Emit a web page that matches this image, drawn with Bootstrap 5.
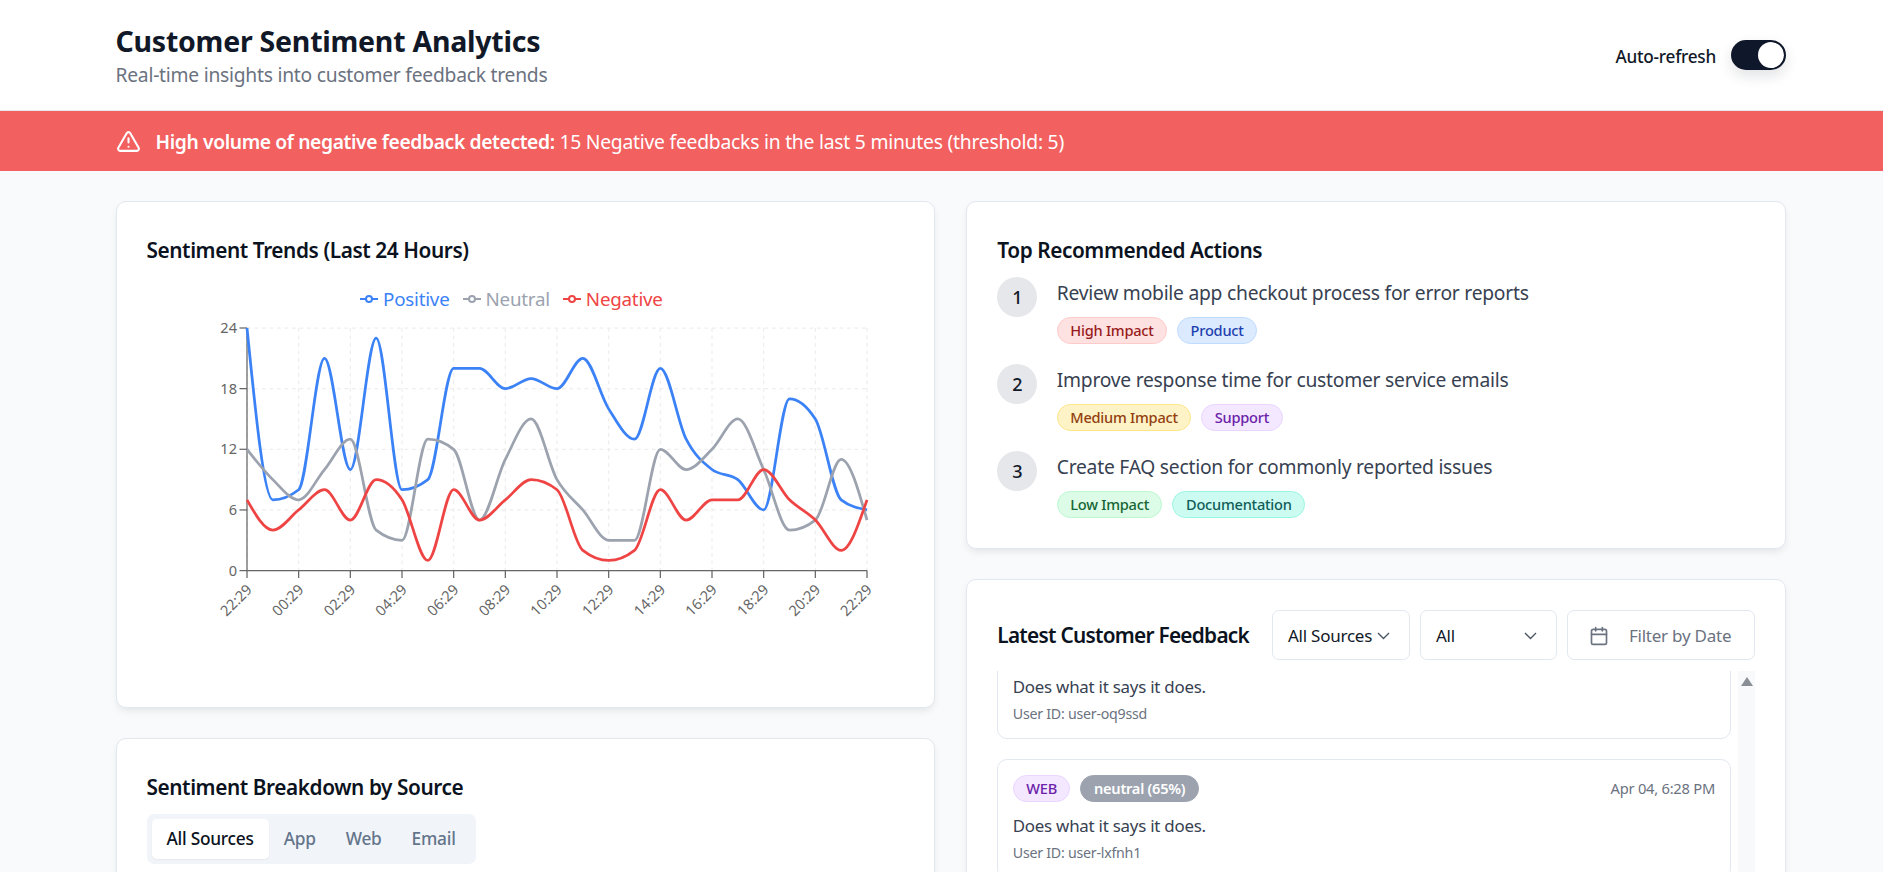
<!doctype html>
<html lang="en">
<head>
<meta charset="utf-8">
<title>Customer Sentiment Analytics</title>
<link href="https://cdn.jsdelivr.net/npm/bootstrap@5.3.0/dist/css/bootstrap.min.css" rel="stylesheet">
<style>
html,body{height:100vh;overflow:hidden}
body{background:#f8fafc;font-family:"Noto Sans","Liberation Sans",sans-serif;color:#374151;letter-spacing:-.015em}
.shell{padding-left:115.5px;padding-right:97px}
.top-head{background:#fff;border-bottom:1px solid #e5e7eb;height:111px}
.top-head .shell{height:110px}
.page-title{font-size:28.5px;font-weight:700;color:#111827;line-height:36px;margin:0}
.page-sub{font-size:19.25px;color:#6b7280;line-height:24px;margin:4px 0 0}
.refresh-wrap{gap:15px}
.refresh-label{font-size:17.2px;font-weight:500;color:#111827;padding-top:4px}
.toggle{width:55px!important;height:30px;margin:0!important;background-color:#0f172a!important;border:2px solid #0f172a!important;box-shadow:0 6px 14px rgba(15,23,42,.12)!important;background-image:url("data:image/svg+xml,%3csvg xmlns='http://www.w3.org/2000/svg' viewBox='-4 -4 8 8'%3e%3ccircle r='4' fill='%23fff'/%3e%3c/svg%3e")!important}
.alert-strip{background:#f26060;color:#fff;height:60px;font-size:19.3px;line-height:28px;letter-spacing:-.012em}
.alert-strip strong{font-weight:600;letter-spacing:-.02em}
.alert-copy{padding-top:2px}
.alert-gap{gap:15px}
.main-area{padding-top:30px}
.main-row{--bs-gutter-x:31px;--bs-gutter-y:0}
.panel{background:#fff;border:1px solid #e2e8f0;border-radius:10px;box-shadow:0 4px 8px -2px rgba(0,0,0,.1);padding:29px 30px 30px}
.panel+.panel{margin-top:30px}
.panel-title{font-size:20.8px;font-weight:600;color:#0b1220;line-height:38px;margin:0;letter-spacing:-.02em}
.trend-panel{height:507px}
.legend-row{height:24px;margin-top:18px;font-size:18.8px;line-height:24px;gap:13px;padding-right:28px}
.legend-item{display:inline-flex;align-items:center;gap:5px}
.c-pos{color:#3b82f6}.c-neu{color:#9ca3af}.c-neg{color:#ef4444}
.chart-svg{display:block;overflow:visible;margin-top:-1px}
.chart-svg text{font-family:"Noto Sans",sans-serif;font-size:14.6px;fill:#666;letter-spacing:0}
.source-panel{height:400px}
.seg-tabs{display:inline-flex;background:#f1f5f9;border-radius:7px;padding:5px;height:50px;margin-top:8px}
.seg-tab{font-size:17.3px;font-weight:500;color:#64748b;padding:0 15px;line-height:40px;border-radius:5px}
.seg-tab.on{background:#fff;color:#0b1220;box-shadow:0 1px 2px rgba(0,0,0,.05)}
.actions-panel{height:348px}
.step{display:flex;gap:19.5px;height:87px}
.actions-panel .step:first-of-type{margin-top:8px}
.step-num{width:40px;height:40px;flex:none;border-radius:50%;background:#e5e7eb;color:#111827;font-weight:500;font-size:18px;display:flex;align-items:center;justify-content:center}
.step-text{font-size:19.25px;line-height:24px;color:#374151;margin:4px 0 0}
.pills{display:flex;gap:10px;margin-top:12px}
.pill{display:inline-block;font-size:14.6px;font-weight:500;line-height:25px;height:27px;border:1px solid;border-radius:14px;padding:0 12.5px}
.p-red{background:#fee2e2;color:#991b1b;border-color:#fecaca}
.p-blue{background:#dbeafe;color:#1e40af;border-color:#bfdbfe}
.p-amber{background:#fef3c7;color:#92400e;border-color:#fde68a}
.p-purple{background:#f3e8ff;color:#6b21a8;border-color:#e9d5ff}
.p-green{background:#dcfce7;color:#166534;border-color:#bbf7d0}
.p-teal{background:#ccfbf1;color:#115e59;border-color:#99f6e4}
.p-gray{background:#9ca3af;color:#fff;border-color:#9ca3af;font-weight:600}
.feed-panel{height:500px;padding-top:30px;padding-bottom:0}
.feed-head{height:50px}
.feed-head .panel-title{letter-spacing:-.035em}
.ctl-group{gap:10px}
.feed-ctl{height:50px;border:1px solid #e2e8f0;border-radius:7px;background:#fff;display:flex;align-items:center;justify-content:space-between;font-size:17px;color:#111827;padding-top:2px}
.ctl-src{width:138px;padding-left:15px;padding-right:19px}
.ctl-sent{width:137px;padding-left:15px;padding-right:19px}
.ctl-date{width:188px;padding-left:21px;padding-right:18px;color:#6b7280;gap:20px;justify-content:flex-start}
.feed-body{margin-top:11px;height:300px;overflow:hidden}
.feed-list{flex:1;overflow:hidden;padding-right:7px}
.feed-item{border:1px solid #e2e8f0;border-radius:10px;padding:15px 15px 15px 14.5px;margin-bottom:20px;background:#fff}
.feed-item.cut{margin-top:-60px;height:128px;padding-top:0}
.feed-item.cut .feed-msg{margin-top:63px}
.feed-meta{font-size:14.7px;color:#6b7280}
.feed-msg{font-size:16.9px;line-height:24px;color:#374151;margin:12px 0 0}
.feed-user{font-size:14.2px;line-height:20px;color:#6b7280;margin:5px 0 0}
.bar-track{width:17px;flex:none;background:#f8f9fa;position:relative}
.bar-up{width:0;height:0;margin:6px auto 0;border-left:6.5px solid transparent;border-right:6.5px solid transparent;border-bottom:9px solid #8a8f96}
</style>
</head>
<body>
<header class="top-head">
  <div class="shell d-flex align-items-center justify-content-between">
    <div>
      <h1 class="page-title">Customer Sentiment Analytics</h1>
      <p class="page-sub">Real-time insights into customer feedback trends</p>
    </div>
    <div class="d-flex align-items-center refresh-wrap mt-n1">
      <label class="refresh-label" for="auto">Auto-refresh</label>
      <div class="form-check form-switch m-0 p-0 d-flex"><input class="form-check-input toggle" type="checkbox" id="auto" checked></div>
    </div>
  </div>
</header>
<div class="alert-strip">
  <div class="shell h-100 d-flex align-items-center alert-gap">
    <svg width="25" height="25" viewBox="0 0 24 24" fill="none" stroke="#fff" stroke-width="2" stroke-linecap="round" stroke-linejoin="round"><path d="m21.73 18-8-14a2 2 0 0 0-3.48 0l-8 14A2 2 0 0 0 4 21h16a2 2 0 0 0 1.73-3Z"/><path d="M12 9v4"/><path d="M12 17h.01"/></svg>
    <div class="alert-copy"><strong>High volume of negative feedback detected:</strong> 15 Negative feedbacks in the last 5 minutes (threshold: 5)</div>
  </div>
</div>
<main class="main-area shell">
  <div class="row main-row">
    <div class="col-6">
      <section class="panel trend-panel">
        <h2 class="panel-title">Sentiment Trends (Last 24 Hours)</h2>
        <div class="legend-row d-flex justify-content-center">
          <span class="legend-item c-pos"><svg width="18" height="12"><path d="M0 6h18" stroke="#3b82f6" stroke-width="2"/><circle cx="9" cy="6" r="3" fill="#fff" stroke="#3b82f6" stroke-width="2"/></svg>Positive</span>
          <span class="legend-item c-neu"><svg width="18" height="12"><path d="M0 6h18" stroke="#9ca3af" stroke-width="2"/><circle cx="9" cy="6" r="3" fill="#fff" stroke="#9ca3af" stroke-width="2"/></svg>Neutral</span>
          <span class="legend-item c-neg"><svg width="18" height="12"><path d="M0 6h18" stroke="#ef4444" stroke-width="2"/><circle cx="9" cy="6" r="3" fill="#fff" stroke="#ef4444" stroke-width="2"/></svg>Negative</span>
        </div>
        <svg id="chart" class="chart-svg" width="757" height="366" viewBox="0 0 757 366"></svg>
      </section>
      <section class="panel source-panel">
        <h2 class="panel-title">Sentiment Breakdown by Source</h2>
        <div class="seg-tabs">
          <span class="seg-tab on">All Sources</span><span class="seg-tab">App</span><span class="seg-tab">Web</span><span class="seg-tab">Email</span>
        </div>
      </section>
    </div>
    <div class="col-6">
      <section class="panel actions-panel">
        <h2 class="panel-title">Top Recommended Actions</h2>
        <div class="step"><div class="step-num">1</div><div><p class="step-text">Review mobile app checkout process for error reports</p><div class="pills"><span class="pill p-red">High Impact</span><span class="pill p-blue">Product</span></div></div></div>
        <div class="step"><div class="step-num">2</div><div><p class="step-text">Improve response time for customer service emails</p><div class="pills"><span class="pill p-amber">Medium Impact</span><span class="pill p-purple">Support</span></div></div></div>
        <div class="step"><div class="step-num">3</div><div><p class="step-text">Create FAQ section for commonly reported issues</p><div class="pills"><span class="pill p-green">Low Impact</span><span class="pill p-teal">Documentation</span></div></div></div>
      </section>
      <section class="panel feed-panel">
        <div class="feed-head d-flex align-items-center justify-content-between">
          <h2 class="panel-title">Latest Customer Feedback</h2>
          <div class="d-flex ctl-group">
            <div class="feed-ctl ctl-src"><span>All Sources</span><svg width="13" height="8" viewBox="0 0 13 8" fill="none" stroke="#4b5563" stroke-width="1.4"><path d="m1 1 5.5 5.5L12 1"/></svg></div>
            <div class="feed-ctl ctl-sent"><span>All</span><svg width="13" height="8" viewBox="0 0 13 8" fill="none" stroke="#4b5563" stroke-width="1.4"><path d="m1 1 5.5 5.5L12 1"/></svg></div>
            <div class="feed-ctl ctl-date"><svg width="20" height="20" viewBox="0 0 24 24" fill="none" stroke="#6b7280" stroke-width="2" stroke-linecap="round" stroke-linejoin="round"><path d="M8 2v4"/><path d="M16 2v4"/><rect x="3" y="4" width="18" height="18" rx="2"/><path d="M3 10h18"/></svg><span>Filter by Date</span></div>
          </div>
        </div>
        <div class="feed-body d-flex">
          <div class="feed-list">
            <article class="feed-item cut"><p class="feed-msg">Does what it says it does.</p><p class="feed-user">User ID: user-oq9ssd</p></article>
            <article class="feed-item">
              <div class="d-flex align-items-center justify-content-between">
                <div class="d-flex pills mt-0"><span class="pill p-purple">WEB</span><span class="pill p-gray">neutral (65%)</span></div>
                <span class="feed-meta">Apr 04, 6:28 PM</span>
              </div>
              <p class="feed-msg">Does what it says it does.</p>
              <p class="feed-user">User ID: user-lxfnh1</p>
            </article>
          </div>
          <div class="bar-track"><div class="bar-up"></div></div>
        </div>
      </section>
    </div>
  </div>
</main>
<script>
(function(){
  var pos=[24,7,8,21,10,23,8,9,20,20,18,19,18,21,16,13,20,13,10,9,6,17,15,7,6];
  var neu=[12,9,7,10,13,4,3,13,12,5,11,15,9,6,3,3,12,10,12,15,10,4,5,11,5];
  var neg=[7,4,6,8,5,9,7,1,8,5,7,9,8,2,1,2,8,5,7,7,10,7,5,2,7];
  var x0=100,x1=720,yT=18,yB=260.6,st=(x1-x0)/24;
  var X=function(i){return x0+st*i},Y=function(v){return yB-(yB-yT)*v/24};
  function sign(v){return v<0?-1:1}
  function mono(d){
    var n=d.length,p=d.map(function(v,i){return [X(i),Y(v)]}),m=[];
    for(var i=1;i<n-1;i++){
      var h0=p[i][0]-p[i-1][0],h1=p[i+1][0]-p[i][0],s0=(p[i][1]-p[i-1][1])/h0,s1=(p[i+1][1]-p[i][1])/h1,q=(s0*h1+s1*h0)/(h0+h1);
      m[i]=(sign(s0)+sign(s1))*Math.min(Math.abs(s0),Math.abs(s1),.5*Math.abs(q))||0;
    }
    m[0]=(3*(p[1][1]-p[0][1])/st-m[1])/2;
    m[n-1]=(3*(p[n-1][1]-p[n-2][1])/st-m[n-2])/2;
    var s='M'+p[0][0]+','+p[0][1];
    for(i=1;i<n;i++){
      var dx=st/3;
      s+='C'+(p[i-1][0]+dx)+','+(p[i-1][1]+dx*m[i-1])+' '+(p[i][0]-dx)+','+(p[i][1]-dx*m[i])+' '+p[i][0]+','+p[i][1];
    }
    return s;
  }
  var o='';
  var i,lab=['22:29','00:29','02:29','04:29','06:29','08:29','10:29','12:29','14:29','16:29','18:29','20:29','22:29'];
  [0,6,12,18,24].forEach(function(v){o+='<path d="M'+x0+' '+Y(v)+'H'+x1+'" stroke="#eeeeee" stroke-width="1.25" stroke-dasharray="3.75 3.75"/>'});
  for(i=0;i<=12;i++){o+='<path d="M'+X(i*2)+' '+yT+'V'+yB+'" stroke="#eeeeee" stroke-width="1.25" stroke-dasharray="3.75 3.75"/>'}
  o+='<path d="M'+x0+' '+yT+'V'+yB+'H'+x1+'" fill="none" stroke="#666" stroke-width="1.25"/>';
  [0,6,12,18,24].forEach(function(v){
    o+='<path d="M'+(x0-7.5)+' '+Y(v)+'H'+x0+'" stroke="#666" stroke-width="1.25"/>';
    o+='<text x="'+(x0-10)+'" y="'+(Y(v)+5)+'" text-anchor="end">'+v+'</text>';
  });
  for(i=0;i<=12;i++){
    var x=X(i*2);
    o+='<path d="M'+x+' '+yB+'v7.5" stroke="#666" stroke-width="1.25"/>';
    o+='<text x="'+(x+6)+'" y="'+(yB+20)+'" text-anchor="end" transform="rotate(-45 '+(x+6)+' '+(yB+20)+')">'+lab[i]+'</text>';
  }
  [[pos,'#3b82f6'],[neu,'#9ca3af'],[neg,'#ef4444']].forEach(function(a){
    o+='<path d="'+mono(a[0])+'" fill="none" stroke="'+a[1]+'" stroke-width="2.75"/>';
  });
  document.getElementById('chart').innerHTML=o;
})();
</script>
<script src="https://cdn.jsdelivr.net/npm/bootstrap@5.3.0/dist/js/bootstrap.bundle.min.js"></script>
</body>
</html>
